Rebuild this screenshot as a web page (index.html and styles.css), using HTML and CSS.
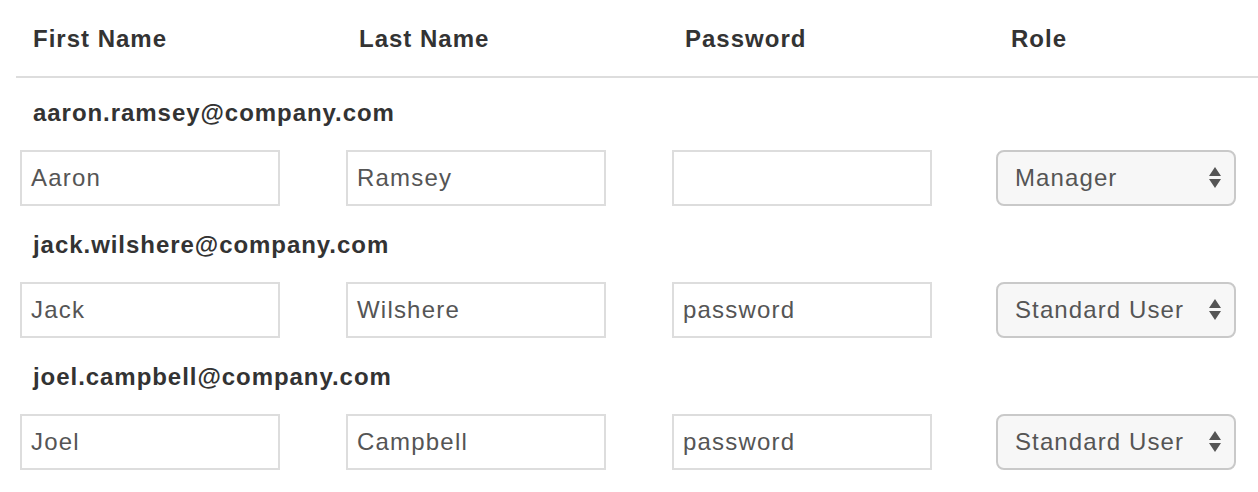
FILE: index.html
```html
<!DOCTYPE html>
<html>
<head>
<meta charset="utf-8">
<link rel="stylesheet" href="styles.css">
</head>
<body>
<div class="table">
  <div class="head">
    <div class="th">First Name</div>
    <div class="th">Last Name</div>
    <div class="th">Password</div>
    <div class="th">Role</div>
  </div>
  <div class="list">
    <div class="user">
      <div class="email">aaron.ramsey@company.com</div>
      <div class="fields">
        <div class="cell"><div class="input">Aaron</div></div>
        <div class="cell"><div class="input">Ramsey</div></div>
        <div class="cell"><div class="input"></div></div>
        <div class="cell"><div class="select"><span>Manager</span><svg class="arrows" width="12" height="24" viewBox="0 0 12 24"><path d="M6 1 L12 10 L0 10 Z M0 13 L12 13 L6 22 Z" fill="#555"/></svg></div></div>
      </div>
    </div>
    <div class="user">
      <div class="email">jack.wilshere@company.com</div>
      <div class="fields">
        <div class="cell"><div class="input">Jack</div></div>
        <div class="cell"><div class="input">Wilshere</div></div>
        <div class="cell"><div class="input">password</div></div>
        <div class="cell"><div class="select"><span>Standard User</span><svg class="arrows" width="12" height="24" viewBox="0 0 12 24"><path d="M6 1 L12 10 L0 10 Z M0 13 L12 13 L6 22 Z" fill="#555"/></svg></div></div>
      </div>
    </div>
    <div class="user">
      <div class="email">joel.campbell@company.com</div>
      <div class="fields">
        <div class="cell"><div class="input">Joel</div></div>
        <div class="cell"><div class="input">Campbell</div></div>
        <div class="cell"><div class="input">password</div></div>
        <div class="cell"><div class="select"><span>Standard User</span><svg class="arrows" width="12" height="24" viewBox="0 0 12 24"><path d="M6 1 L12 10 L0 10 Z M0 13 L12 13 L6 22 Z" fill="#555"/></svg></div></div>
      </div>
    </div>
  </div>
</div>
</body>
</html>
```
FILE: styles.css
```css
html, body {
  margin: 0;
  padding: 0;
  background: #fff;
  overflow: hidden;
}
body {
  font-family: "Liberation Sans", Arial, sans-serif;
  color: #333;
}
.table {
  margin-left: 16px;
  width: 1304px;
}
.head {
  display: grid;
  grid-template-columns: repeat(4, 326px);
  padding: 27px 0 25px;
  border-bottom: 2px solid #ddd;
}
.th {
  font-size: 24px;
  line-height: 24px;
  font-weight: bold;
  letter-spacing: 1px;
  padding-left: 17px;
  color: #333;
}
.list {
  padding-top: 23px;
  display: flex;
  flex-direction: column;
  gap: 27px;
}
.email {
  font-size: 24px;
  line-height: 24px;
  font-weight: bold;
  letter-spacing: 0.95px;
  padding-left: 17px;
  color: #333;
}
.fields {
  margin-top: 25px;
  display: grid;
  grid-template-columns: repeat(4, 326px);
}
.cell {
  padding-left: 4px;
}
.input {
  box-sizing: border-box;
  width: 260px;
  height: 56px;
  border: 2px solid #ddd;
  padding-left: 9px;
  font-size: 24px;
  line-height: 52px;
  letter-spacing: 1.2px;
  color: #555;
}
.select {
  box-sizing: border-box;
  margin-left: -2px;
  width: 240px;
  height: 56px;
  border: 2px solid #c9c9c9;
  border-radius: 8px;
  background: #f7f7f7;
  padding: 0 13px 0 17px;
  font-size: 24px;
  letter-spacing: 1.1px;
  color: #555;
  display: flex;
  align-items: center;
  justify-content: space-between;
}
.arrows {
  display: block;
}
```
